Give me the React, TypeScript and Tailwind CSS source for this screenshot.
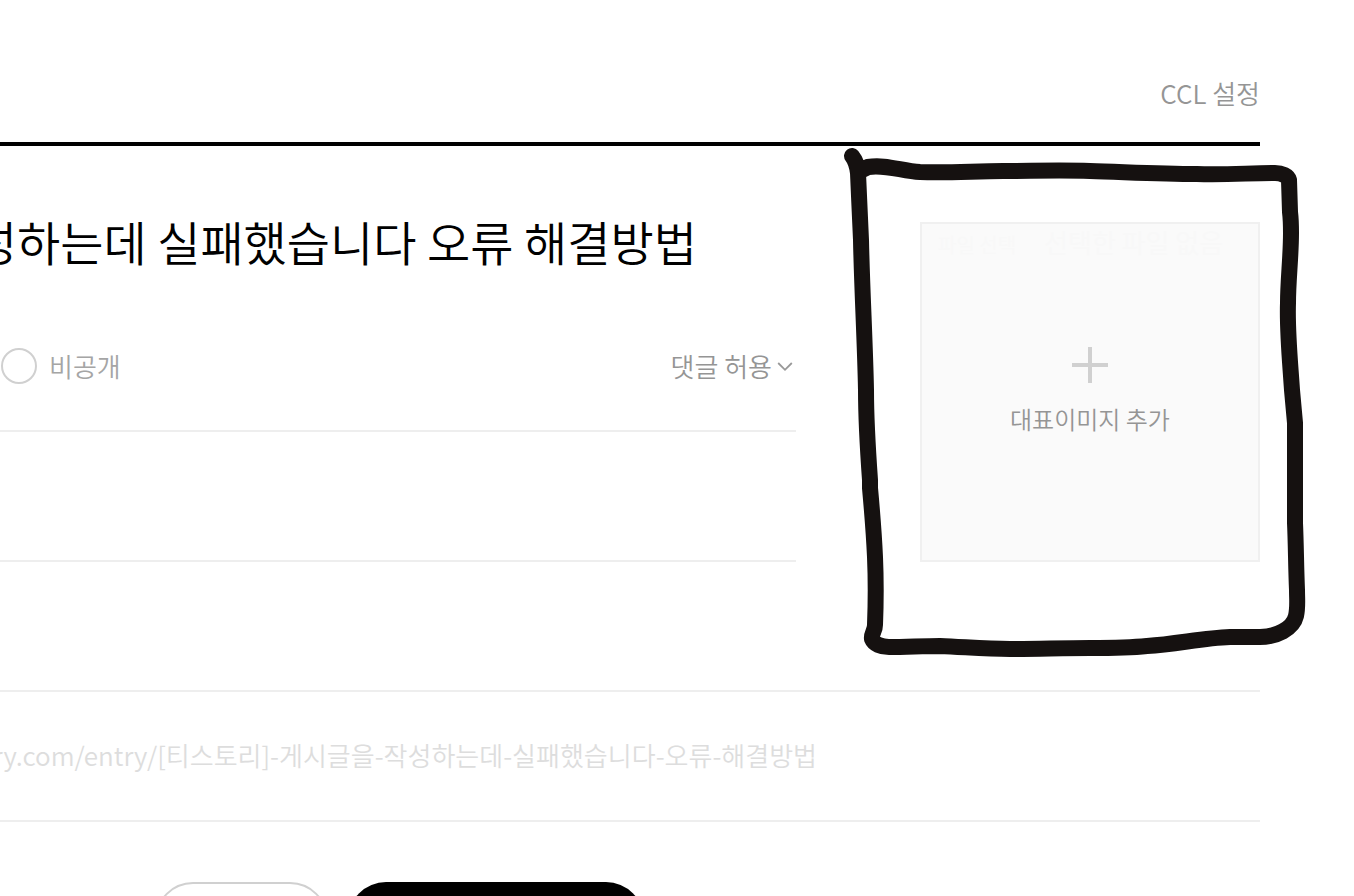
import React from 'react';

function Chevron() {
  return (
    <svg className="h-4 w-4" viewBox="0 0 16 16" fill="none" stroke="#999" strokeWidth="1.8" aria-hidden="true">
      <path d="M1.2 5 8 11.8 14.8 5" />
    </svg>
  );
}

function ThumbnailPicker() {
  return (
    <label className="flex h-[340px] w-[340px] shrink-0 cursor-pointer flex-col border-2 border-[#f0f0f0] bg-[#fafafa]">
      <span className="flex h-[34px] items-center gap-7 pl-4 text-[#f8f8f8]">
        <span className="pt-2 text-[20px]">파일 선택</span>
        <span className="text-[26px]">선택한 파일 없음</span>
      </span>
      <input type="file" accept="image/*" className="sr-only" />
      <span className="flex flex-col items-center pt-[89px]">
        <svg className="h-9 w-9" viewBox="0 0 36 36" fill="none" stroke="#d0d0d0" strokeWidth="4" aria-hidden="true">
          <path d="M18 0v36M0 18h36" />
        </svg>
        <span className="mt-[18px] text-[24px] leading-[36px] text-[#959595]">대표이미지 추가</span>
      </span>
    </label>
  );
}

function PenOutline() {
  return (
    <svg
      className="pointer-events-none absolute top-0 left-0 h-[896px] w-[1354px] max-w-none"
      viewBox="0 0 1354 896"
      fill="none"
      stroke="#151110"
      strokeWidth="16"
      strokeLinecap="round"
      strokeLinejoin="round"
      aria-hidden="true"
    >
      <path d="M852 156C856 161 857 165 858 173C859 195 860 220 861 240C862 290 865 340 866 390C866 420 868 452 870 480L870 488C872 510 874 535 875 557C876 580 876 600 875 625C875 631 871 634 872 639C874 644 881 647 889 647C907 647 922 646 940 646C965 647 985 649 1010 649C1037 649 1063 648 1090 648C1110 648 1128 648 1147 646C1177 644 1203 638 1230 637L1260 637C1276 637 1293 629 1296 616C1298 607 1297 600 1297 590C1296 567 1296 545 1295 523C1295 490 1295 456 1295 423C1294 412 1293 401 1292 390C1290 360 1287 330 1288 303C1288 280 1291 257 1291 233C1291 225 1291 220 1290 212L1289 180C1288 176 1282 173 1275 173C1250 173 1225 175 1197 174C1160 174 1125 172 1090 171C1060 170 1030 171 1003 171C975 171 950 173 920 172C902 171 885 164 868 167L858 172" />
    </svg>
  );
}

export default function App() {
  return (
    <main className="relative h-screen overflow-hidden bg-white font-['Noto_Sans_CJK_KR',sans-serif] font-[350]">
      <div className="pr-[94px]">
        <header className="flex h-[146px] items-end justify-end border-b-4 border-black pb-[30px]">
          <button type="button" className="text-[26px] leading-[38px] text-[#959595]">CCL 설정</button>
        </header>

        <section className="flex h-[546px] items-start justify-between gap-[124px] border-b-2 border-[#eee] pt-[76px]">
          <div className="min-w-0 flex-1">
            <h1 className="-mt-4 flex w-[697px] justify-end overflow-hidden text-[47px] leading-[70px] whitespace-nowrap text-black">
              성하는데 실패했습니다 오류 해결방법
            </h1>
            <div className="flex h-[156px] items-center justify-between border-b-2 border-[#eee] pt-[26px]">
              <label className="flex items-center gap-3 pl-px text-[26px] leading-[38px] text-[#a5a5a5]">
                <input
                  type="radio"
                  name="visibility"
                  className="h-9 w-9 appearance-none rounded-full border-2 border-[#d0d0d0] bg-white checked:border-black"
                />
                비공개
              </label>
              <button type="button" className="flex items-center gap-[5px] pr-[3px] text-[26px] leading-[38px] text-[#959595]">
                댓글 허용
                <Chevron />
              </button>
            </div>
            <div className="h-[130px] border-b-2 border-[#eee]" />
          </div>
          <ThumbnailPicker />
        </section>

        <section className="flex h-[130px] items-center border-b-2 border-[#eee]">
          <p className="flex w-[817px] justify-end overflow-hidden pb-[2px] text-[26px] leading-[38px] whitespace-nowrap text-[#ddd]">
            ry.com/entry/[티스토리]-게시글을-작성하는데-실패했습니다-오류-해결방법
          </p>
        </section>

        <footer className="flex gap-5 pt-[60px] pl-[155px]">
          <button type="button" aria-label="취소" className="h-[76px] w-[173px] rounded-full border-2 border-[#d0d0d0] bg-white" />
          <button type="button" aria-label="발행" className="h-[76px] w-[296px] rounded-full bg-black" />
        </footer>
      </div>
      <PenOutline />
    </main>
  );
}
